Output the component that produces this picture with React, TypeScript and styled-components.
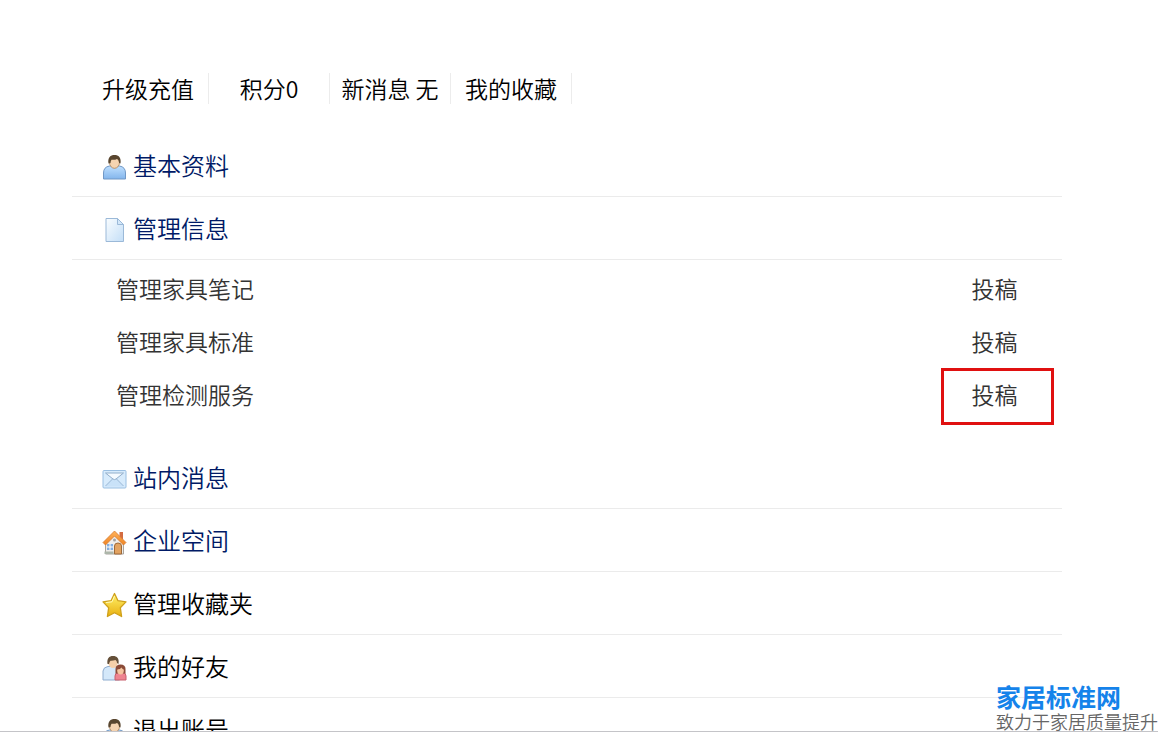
import React from "react";
import styled, { createGlobalStyle } from "styled-components";

const GlobalStyle = createGlobalStyle`
  * { box-sizing: border-box; }
  body {
    margin: 0;
    background: #fff;
    color: #000;
    font-family: "Noto Sans CJK SC", "Open Sans", sans-serif;
    font-weight: 350;
  }
  a { color: inherit; text-decoration: none; }
`;

const Page = styled.main`
  position: relative;
  height: 100vh;
  overflow: hidden;
  padding: 73px 96px 0 72px;
  border-bottom: 1px solid #c4c4c8;
`;

const StatBar = styled.nav`
  display: flex;
  padding-left: 16px;
  margin-bottom: 30px;
`;

const Stat = styled.a`
  width: 121px;
  height: 31px;
  border-right: 1px solid #ececec;
  font-size: 23px;
  line-height: 31px;
  text-align: center;
  white-space: nowrap;
`;

const MenuRow = styled.a<{ $tone: "navy" | "black" }>`
  display: flex;
  align-items: center;
  gap: 6px;
  height: 63px;
  padding-left: 30px;
  border-bottom: 1px solid #ebebeb;
  font-size: 24px;
  line-height: 36px;
  color: ${(p) => (p.$tone === "navy" ? "#001a66" : "#000")};
`;

const Icon = styled.svg`
  width: 25px;
  height: 26px;
  margin-top: 4px;
  flex: none;
`;

const Label = styled.span`
  margin-top: -1px;
`;

const SubList = styled.ul`
  list-style: none;
  margin: 0;
  padding: 1px 8px 26px 44px;
`;

const SubRow = styled.li`
  display: flex;
  justify-content: space-between;
  align-items: center;
  height: 53px;
  font-size: 23px;
  line-height: 36px;
  color: #333;
`;

const Submit = styled.a`
  position: relative;
  width: 113px;
  padding-right: 6px;
  text-align: center;
`;

const Highlight = styled.span`
  position: absolute;
  inset: -8px 0 -13px;
  border: 3px solid #e01010;
`;

const Watermark = styled.aside`
  position: absolute;
  right: 0;
  bottom: -2px;
  white-space: nowrap;
`;

const BrandName = styled.div`
  color: #1583ea;
  font-size: 25px;
  font-weight: 700;
  line-height: 26px;
`;

const BrandSlogan = styled.div`
  color: #666;
  font-size: 18px;
  line-height: 24px;
`;

const Defs = () => (
  <svg width="0" height="0" style={{ display: "block" }} aria-hidden="true">
    <defs>
      <linearGradient id="blue" x1="0" y1="0" x2="0" y2="1">
        <stop offset="0" stopColor="#bfe0ff" />
        <stop offset="1" stopColor="#83b5ec" />
      </linearGradient>
      <linearGradient id="paper" x1="0" y1="0" x2="1" y2="1">
        <stop offset="0" stopColor="#fafdff" />
        <stop offset="1" stopColor="#c3def7" />
      </linearGradient>
      <linearGradient id="gold" x1="0" y1="0" x2="0" y2="1">
        <stop offset="0" stopColor="#fff26a" />
        <stop offset="1" stopColor="#e9b010" />
      </linearGradient>
      <linearGradient id="roof" x1="0" y1="0" x2="0" y2="1">
        <stop offset="0" stopColor="#ffb35a" />
        <stop offset="1" stopColor="#ef8424" />
      </linearGradient>
    </defs>
  </svg>
);

const UserIcon = () => (
  <Icon viewBox="0 0 24 26" aria-hidden="true">
    <path d="M1 25v-6q0-6 6-7h10q6 1 6 7v6z" fill="url(#blue)" stroke="#7198c6" />
    <path d="M8 12l4 3 4-3-1-2H9z" fill="#f2c9a2" />
    <ellipse cx="12" cy="8.500" rx="5" ry="5.800" fill="#f6d4b1" stroke="#a47a50" strokeWidth=".7" />
    <path d="M6 9.500C5 3.500 8 1 12 1s7 2.500 6 8.500l-1.500-.7c0-2-.8-3.300-2.200-3.800-1.500 1-4.200 1-5.300.7-.7 1-.9 2-1 3.200z" fill="#59462f" />
  </Icon>
);

const PageIcon = () => (
  <Icon viewBox="0 0 24 26" aria-hidden="true">
    <path d="M3.500 1.500H15l6 6v17H3.500z" fill="url(#paper)" stroke="#9bb9d8" />
    <path d="M15 1.500v6h6z" fill="#d3e7fa" stroke="#9bb9d8" strokeLinejoin="round" />
  </Icon>
);

const MailIcon = () => (
  <Icon viewBox="0 0 24 26" aria-hidden="true">
    <rect x=".5" y="4.500" width="23" height="17.500" rx="1" fill="#d7ebfc" stroke="#9abfe2" />
    <path d="M2.500 20.500l7.500-8h4l7.500 8z" fill="#c9e2f8" />
    <path d="M3 20l7-7M21 20l-7-7" stroke="#9bb8d6" fill="none" />
    <path d="M3 7l7.500 6q1.500 1.200 3 0L21 7z" fill="#f4faff" stroke="#91aecb" />
  </Icon>
);

const HomeIcon = () => (
  <Icon viewBox="0 0 24 26" aria-hidden="true">
    <path d="M17 3h3.500v7H17z" fill="#d36c42" />
    <path d="M3 12L12 5l9 7v13H3z" fill="#efedea" stroke="#aaa49e" />
    <path d="M4.500 15h6v6h-6z" fill="#83aee0" />
    <path d="M7.500 15v6M4.500 18h6" stroke="#fff" />
    <path d="M12 25v-8q0-3 3.500-3t3.500 3v8z" fill="#e2a260" stroke="#9e6938" />
    <path d="M2 22.500h9V25H2z" fill="#adb6aa" />
    <path d="M12 2L.5 13.500 3 16l9-9 9 9 2.500-2.500z" fill="url(#roof)" stroke="#d67b31" strokeWidth=".8" strokeLinejoin="round" />
    <circle cx="12" cy="11" r="1.500" fill="#a3a1a0" />
  </Icon>
);

const StarIcon = () => (
  <Icon viewBox="0 0 24 26" aria-hidden="true">
    <path d="M12 1.500l3.500 7.200 8 1.200-5.700 5.800 1.300 8.800-7.100-3.800-7.100 3.800 1.300-8.800L.5 9.900l8-1.200z" fill="url(#gold)" stroke="#cfa01a" strokeWidth="1.300" strokeLinejoin="round" />
    <path d="M12 4l-2.500 5.800-6 .8" fill="none" stroke="#fffab9" />
  </Icon>
);

const FriendsIcon = () => (
  <Icon viewBox="0 0 24 26" aria-hidden="true">
    <path d="M.5 25v-9q.5-4 5-4.500H13q4 .5 4 5V25z" fill="#d4e8fa" stroke="#8fadd0" />
    <ellipse cx="10.500" cy="7.500" rx="4.700" ry="5.500" fill="#f5d0aa" />
    <path d="M5 9C4.300 3.500 6.500 1 10.500 1S17 3.500 16 9l-1.500-1q0-2-1.500-3-2.500 1-5 .8Q7 6.500 6.500 9z" fill="#655039" />
    <path d="M12.500 25v-4q0-3 3-3.500h5q3 .5 3 3.500v4z" fill="#ee8490" stroke="#c85e6d" />
    <path d="M13 18.500V14q0-4.500 5-4.500t5 4.500v4.500z" fill="#8b4b38" />
    <ellipse cx="18" cy="15.500" rx="3.300" ry="3.900" fill="#f5c5a0" />
    <path d="M14.500 14.500q3.500 0 4.500-2 1 2 2.500 2V12q-3.500-3-7 0z" fill="#8b4b38" />
  </Icon>
);

const stats = ["升级充值", "积分0", "新消息 无", "我的收藏"];

const articles = [
  { name: "管理家具笔记", marked: false },
  { name: "管理家具标准", marked: false },
  { name: "管理检测服务", marked: true },
];

export default function App() {
  return (
    <>
      <GlobalStyle />
      <Defs />
      <Page>
        <StatBar>
          {stats.map((s) => (
            <Stat href="#" key={s}>{s}</Stat>
          ))}
        </StatBar>
        <MenuRow href="#" $tone="navy"><UserIcon /><Label>基本资料</Label></MenuRow>
        <MenuRow href="#" $tone="navy"><PageIcon /><Label>管理信息</Label></MenuRow>
        <SubList>
          {articles.map((a) => (
            <SubRow key={a.name}>
              <a href="#">{a.name}</a>
              <Submit href="#">
                投稿
                {a.marked && <Highlight />}
              </Submit>
            </SubRow>
          ))}
        </SubList>
        <MenuRow href="#" $tone="navy"><MailIcon /><Label>站内消息</Label></MenuRow>
        <MenuRow href="#" $tone="navy"><HomeIcon /><Label>企业空间</Label></MenuRow>
        <MenuRow href="#" $tone="black"><StarIcon /><Label>管理收藏夹</Label></MenuRow>
        <MenuRow href="#" $tone="black"><FriendsIcon /><Label>我的好友</Label></MenuRow>
        <MenuRow href="#" $tone="black"><UserIcon /><Label>退出账号</Label></MenuRow>
        <Watermark>
          <BrandName>家居标准网</BrandName>
          <BrandSlogan>致力于家居质量提升</BrandSlogan>
        </Watermark>
      </Page>
    </>
  );
}
